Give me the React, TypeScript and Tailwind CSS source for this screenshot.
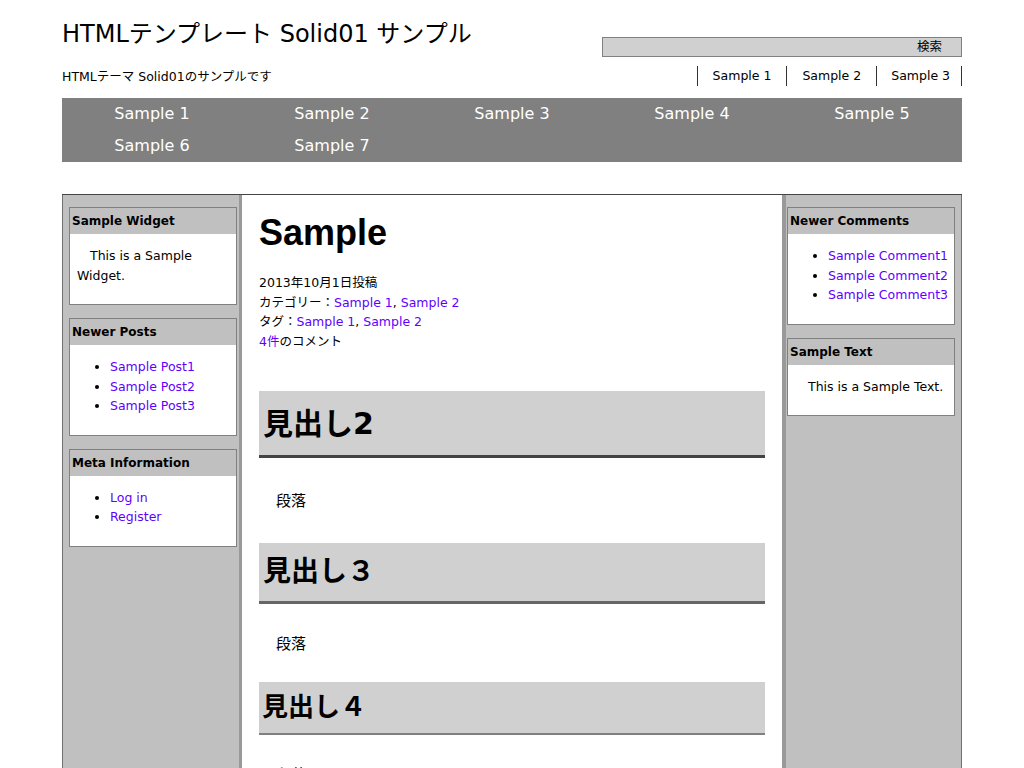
const font = "font-['DejaVu_Sans','Noto_Sans_CJK_JP',sans-serif]";

const navItems = ["Sample 1", "Sample 2", "Sample 3", "Sample 4", "Sample 5", "Sample 6", "Sample 7"];

function Widget({ title, children }: { title: string; children: React.ReactNode }) {
  return (
    <div className="border border-[#808080] bg-white">
      <div className="h-[26px] bg-[#c0c0c0] pl-[2px] text-[12px] font-bold leading-[26px] text-black">{title}</div>
      <div className="pt-[12px] pb-[19px] text-[12.5px] leading-[19.5px]">{children}</div>
    </div>
  );
}

function LinkList({ items }: { items: string[] }) {
  return (
    <ul className="list-disc pl-[40px]">
      {items.map((t) => (
        <li key={t}>
          <a className="text-[#6000ff]">{t}</a>
        </li>
      ))}
    </ul>
  );
}

export default function App() {
  return (
    <div className={`${font} min-h-screen bg-white text-black`}>
      <div className="mx-auto w-[900px]">
        {/* header */}
        <div className="flex h-[98px] justify-between">
          <div className="pt-[18px]">
            <h1 className="text-[24px] leading-[32px]">HTMLテンプレート Solid01 サンプル</h1>
            <p className="mt-[17px] text-[12.5px] leading-[19.5px]">HTMLテーマ Solid01のサンプルです</p>
          </div>
          <div className="flex flex-col items-end pt-[37px]">
            <div className="flex h-[20px] w-[360px] items-center justify-end border border-[#808080] bg-[#d0d0d0] pr-[19px] text-[12.5px]">
              検索
            </div>
            <div className="mt-[9px] flex h-[20px] border-r border-[#333]">
              <a className="flex items-center border-l border-[#333] px-[15px] text-[12.5px]">Sample 1</a>
              <a className="flex items-center border-l border-[#333] px-[15px] text-[12.5px]">Sample 2</a>
              <a className="flex items-center border-l border-[#333] pr-[11px] pl-[14px] text-[12.5px]">Sample 3</a>
            </div>
          </div>
        </div>

        {/* nav */}
        <nav className="grid grid-cols-5 bg-[#808080]">
          {navItems.map((t) => (
            <a key={t} className="flex h-[32px] items-center justify-center text-[16px] text-white">
              {t}
            </a>
          ))}
        </nav>

        {/* main */}
        <div className="mt-[32px] flex min-h-[600px] border-t border-[#444]">
          <aside className="flex w-[180px] flex-col gap-[13px] border-l border-r-[3px] border-l-[#707070] border-r-[#999] bg-[#c0c0c0] pt-[12px] pr-[2px] pb-[20px] pl-[6px]">
            <Widget title="Sample Widget">
              <p className="px-[7px] indent-[13px]">This is a Sample Widget.</p>
            </Widget>
            <Widget title="Newer Posts">
              <LinkList items={["Sample Post1", "Sample Post2", "Sample Post3"]} />
            </Widget>
            <Widget title="Meta Information">
              <LinkList items={["Log in", "Register"]} />
            </Widget>
          </aside>

          <main className="w-[540px] bg-white px-[17px] pb-[40px]">
            <h2 className="pt-[16px] font-['Liberation_Sans','Noto_Sans_CJK_JP',sans-serif] text-[36px] font-bold leading-[44px]">
              Sample
            </h2>
            <div className="mt-[18px] text-[12.5px] leading-[19.5px]">
              <p>2013年10月1日投稿</p>
              <p>
                カテゴリー：<a className="text-[#6000ff]">Sample 1</a>, <a className="text-[#6000ff]">Sample 2</a>
              </p>
              <p>
                タグ：<a className="text-[#6000ff]">Sample 1</a>, <a className="text-[#6000ff]">Sample 2</a>
              </p>
              <p>
                <a className="text-[#6000ff]">4件</a>のコメント
              </p>
            </div>

            <h3 className="mt-[40px] flex h-[67px] items-center border-b-[3px] border-[#444] bg-[#d0d0d0] pl-[4px] text-[30px] font-bold">
              見出し2
            </h3>
            <p className="mt-[33px] pl-[17px] text-[15px] leading-[20px]">段落</p>

            <h4 className="mt-[32px] flex h-[61px] items-center border-b-[3px] border-[#666] bg-[#d0d0d0] pl-[4px] text-[28px] font-bold">
              見出し３
            </h4>
            <p className="mt-[30px] pl-[17px] text-[15px] leading-[20px]">段落</p>

            <h5 className="mt-[28px] flex h-[53px] items-center border-b-2 border-[#808080] bg-[#d0d0d0] pl-[3px] text-[26px] font-bold">
              見出し４
            </h5>
            <p className="mt-[30px] pl-[17px] text-[15px] leading-[20px]">段落</p>
          </main>

          <aside className="flex w-[180px] flex-col gap-[13px] border-l-4 border-r border-l-[#999] border-r-[#707070] bg-[#c0c0c0] pt-[12px] pr-[6px] pb-[20px] pl-[1px]">
            <Widget title="Newer Comments">
              <LinkList items={["Sample Comment1", "Sample Comment2", "Sample Comment3"]} />
            </Widget>
            <Widget title="Sample Text">
              <p className="px-[7px] indent-[13px]">This is a Sample Text.</p>
            </Widget>
          </aside>
        </div>
      </div>
    </div>
  );
}
